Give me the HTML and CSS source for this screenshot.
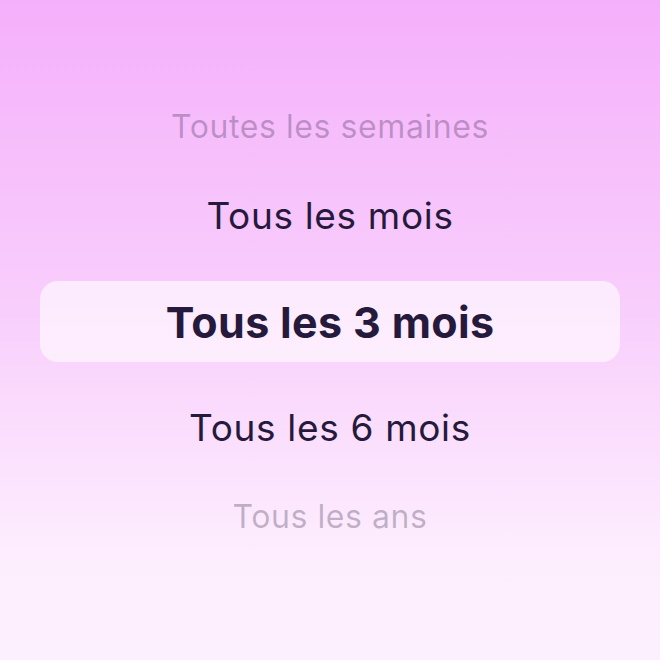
FILE: index.html
```html
<!DOCTYPE html>
<html lang="fr">
<head>
    <meta charset="UTF-8">
    <meta name="viewport" content="width=device-width, initial-scale=1.0">
    <title>Fréquence</title>
    <link rel="stylesheet" href="styles.css">
</head>
<body>
    <div class="picker">
        <div class="item far">Toutes les semaines</div>
        <div class="item near">Tous les mois</div>
        <div class="item selected">Tous les 3 mois</div>
        <div class="item near">Tous les 6 mois</div>
        <div class="item far">Tous les ans</div>
    </div>
</body>
</html>
```

FILE: styles.css
```css
html, body {
    height: 100%;
}

body {
    margin: 0;
    font-family: Inter, "Noto Sans", sans-serif;
    background: linear-gradient(to bottom, #f5b0fb 0%, #f8cdfc 45%, #fdeefe 85%, #fdf0fe 100%);
    color: #261a3c;
}

.picker {
    display: flex;
    flex-direction: column;
    padding: 82px 40px 0;
}

.item {
    height: 89px;
    display: flex;
    align-items: center;
    justify-content: center;
    white-space: nowrap;
    letter-spacing: 0.018em;
}

.item.far {
    font-size: 32px;
    color: rgba(38, 26, 60, 0.28);
}

.item.near {
    font-size: 37px;
    color: #261a3c;
}

.item.selected {
    height: 81px;
    margin: 21px 0;
    border-radius: 18px;
    background: rgba(255, 255, 255, 0.6);
    font-size: 43px;
    font-weight: 700;
    letter-spacing: 0.008em;
    color: #261a3c;
}
```
